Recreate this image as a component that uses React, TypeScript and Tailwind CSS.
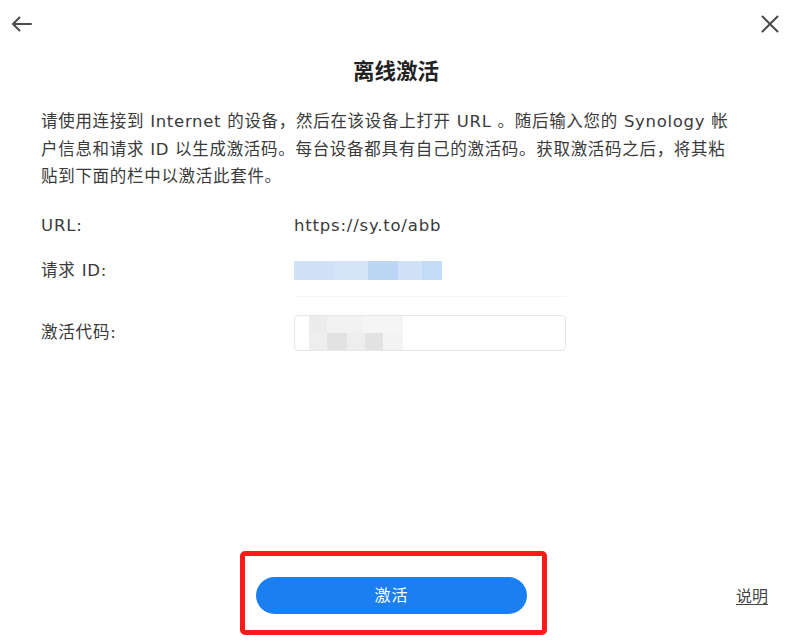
const font = {
  fontFamily: '"DejaVu Sans", "Noto Sans CJK SC", sans-serif',
};

export default function App() {
  return (
    <div
      className="relative flex h-[641px] w-[800px] flex-col bg-white text-[#3a3a3a]"
      style={font}
    >
      {/* top bar */}
      <div className="flex h-[46px] items-center justify-between pl-[8px] pr-[16px] pt-[2px]">
        <svg width="28" height="28" viewBox="0 0 28 28" fill="none" stroke="#4a4a4a" strokeWidth="2" strokeLinecap="round" strokeLinejoin="round">
          <path d="M5 14h18M11.5 7.5 5 14l6.5 6.5" />
        </svg>
        <svg width="28" height="28" viewBox="0 0 28 28" fill="none" stroke="#4a4a4a" strokeWidth="2" strokeLinecap="round">
          <path d="M6.5 6.5l15 15M21.5 6.5l-15 15" />
        </svg>
      </div>

      <h1 className="mt-[12px] pr-[8px] text-center text-[21.5px] font-bold leading-[28px] text-[#222]">
        离线激活
      </h1>

      <p className="mt-[22px] pl-[41px] text-[16.5px] leading-[27.5px] tracking-[0.7px] whitespace-nowrap">
        请使用连接到 Internet 的设备，然后在该设备上打开 URL 。随后输入您的 Synology 帐
        <br />
        户信息和请求 ID 以生成激活码。每台设备都具有自己的激活码。获取激活码之后，将其粘
        <br />
        贴到下面的栏中以激活此套件。
      </p>

      <div className="mt-[20px] grid grid-cols-[253px_1fr] items-center pl-[41px] text-[16.5px] tracking-[0.8px]">
        <div className="h-[30px] leading-[30px]">URL:</div>
        <div className="h-[30px] leading-[30px]">https://sy.to/abb</div>

        <div className="mt-[15px] h-[30px] leading-[30px]">请求 ID:</div>
        <div className="mt-[15px] flex h-[30px] items-center">
          <div className="flex h-[19px] w-[148px]">
            <div className="w-[40px] bg-[#cfe2f8]" />
            <div className="w-[34px] bg-[#d4e5f9]" />
            <div className="w-[30px] bg-[#bcd7f5]" />
            <div className="w-[24px] bg-[#cfe2f8]" />
            <div className="w-[20px] bg-[#c3dbf6]" />
          </div>
        </div>

        <div className="col-span-2 ml-[253px] mt-[10px] h-px w-[272px] bg-[#f5f5f5]" />

        <div className="mt-[18px] h-[36px] leading-[36px]">激活代码:</div>
        <div className="mt-[18px] flex h-[36px] w-[272px] items-stretch overflow-hidden rounded-[4px] border border-[#e3e8ee] pl-[14px]">
          <div className="flex w-[94px] flex-col">
            <div className="flex h-1/2">
              <div className="w-[18px] bg-[#ececec]" />
              <div className="w-[36px] bg-[#f2f2f2]" />
              <div className="w-[40px] bg-[#f5f5f5]" />
            </div>
            <div className="flex h-1/2">
              <div className="w-[18px] bg-[#eeeeee]" />
              <div className="w-[20px] bg-[#e2e2e2]" />
              <div className="w-[18px] bg-[#eeeeee]" />
              <div className="w-[18px] bg-[#e2e2e2]" />
              <div className="w-[20px] bg-[#f3f3f3]" />
            </div>
          </div>
        </div>
      </div>

      {/* footer */}
      <div className="mt-auto flex items-center pb-[6px]">
        <div className="ml-[240px] rounded-[5px] border-[5px] border-[#ff1a1a] pb-[16px] pl-[11px] pr-[15px] pt-[21px]">
          <button className="flex h-[37px] w-[271px] items-center justify-center rounded-full bg-[#1a7ff0] text-[16px] tracking-[1px] text-white">
            激活
          </button>
        </div>
        <a className="ml-auto mr-[32px] mt-[8px] text-[16px] text-[#444] underline underline-offset-2">
          说明
        </a>
      </div>
    </div>
  );
}
